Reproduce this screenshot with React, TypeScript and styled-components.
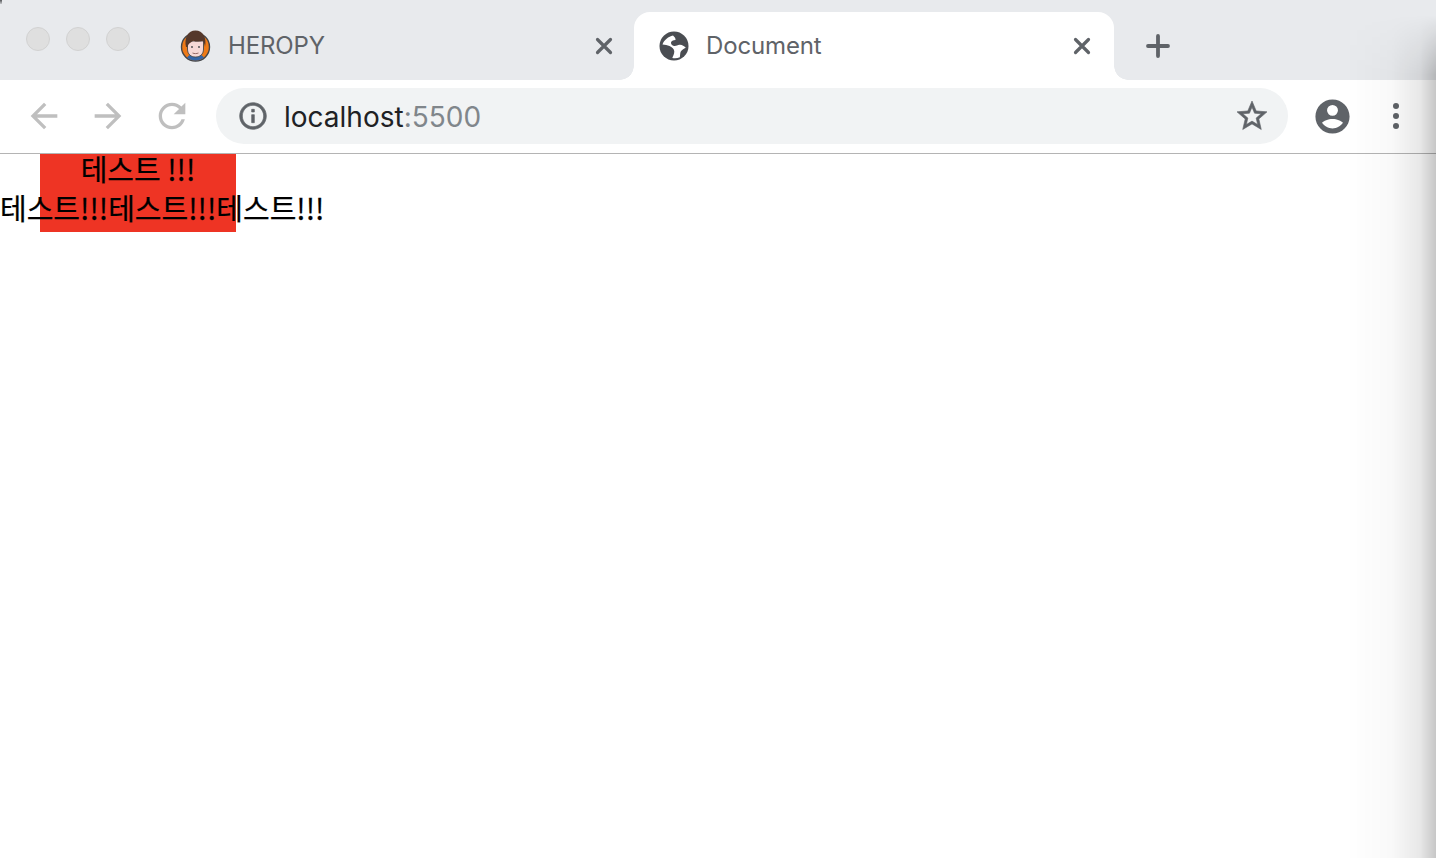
import styled, { createGlobalStyle } from 'styled-components';

const GlobalStyle = createGlobalStyle`
    html, body {
        margin: 0;
        padding: 0;
        height: 100%;
        background: #fff;
        overflow: hidden;
    }
`;

const Icon = ({ d, size, color, weight = 0 }: { d: string; size: number; color: string; weight?: number }) => (
    <svg width={size} height={size} viewBox="0 0 24 24" fill={color} stroke={color} strokeWidth={weight}>
        <path d={d} fillRule="evenodd" />
    </svg>
);

const paths = {
    back: 'M20 11H7.83l5.59-5.59L12 4l-8 8 8 8 1.41-1.41L7.83 13H20v-2z',
    forward: 'M12 4l-1.41 1.41L16.17 11H4v2h12.17l-5.58 5.59L12 20l8-8z',
    reload: 'M17.65 6.35C16.2 4.9 14.21 4 12 4c-4.42 0-7.99 3.58-7.99 8s3.57 8 7.99 8c3.73 0 6.84-2.55 7.73-6h-2.08c-.82 2.33-3.04 4-5.65 4-3.31 0-6-2.69-6-6s2.69-6 6-6c1.66 0 3.14.69 4.22 1.78L13 11h7V4l-2.35 2.35z',
    info: 'M11 7h2v2h-2zm0 4h2v6h-2zm1-9C6.48 2 2 6.48 2 12s4.48 10 10 10 10-4.48 10-10S17.52 2 12 2zm0 18c-4.41 0-8-3.59-8-8s3.59-8 8-8 8 3.59 8 8-3.59 8-8 8z',
    star: 'M22 9.24l-7.19-.62L12 2 9.19 8.63 2 9.24l5.46 4.73L5.82 21 12 17.27 18.18 21l-1.63-7.03L22 9.24zM12 15.4l-3.76 2.27 1-4.28-3.32-2.88 4.38-.38L12 6.1l1.71 4.04 4.38.38-3.32 2.88 1 4.28L12 15.4z',
    account: 'M12 2C6.48 2 2 6.48 2 12s4.48 10 10 10 10-4.48 10-10S17.52 2 12 2zm0 3.2a3.2 3.2 0 1 1 0 6.4 3.2 3.2 0 0 1 0-6.4zM12 13.4c2.6 0 5.2 1 6.1 2.3-1.3 2-3.6 3.3-6.1 3.3s-4.8-1.3-6.1-3.3c.9-1.3 3.5-2.3 6.1-2.3z',
};

const CloseIcon = () => (
    <svg width={28} height={28} viewBox="0 0 28 28" stroke="#5f6368" strokeWidth={3.2} strokeLinecap="round">
        <path d="M7.5 7.5l13 13M20.500 7.500l-13 13" />
    </svg>
);

const PlusIcon = () => (
    <svg width={36} height={36} viewBox="0 0 36 36" stroke="#5f6368" strokeWidth={3.8} strokeLinecap="round">
        <path d="M18 8v20M8 18h20" />
    </svg>
);

const GlobeIcon = () => (
    <svg width={30} height={30} viewBox="0 0 30 30">
        <circle cx={15} cy={15} r={14.500} fill="#4a4d52" />
        <path
            d="M14 4.500C9.500 5.500 5 9 3.500 13.500c2.500.5 5 .5 7 1.500 2.500 1.300 4.800 3 4.800 5.500 0 2.500-1.300 4.500-2 6.500 2.700.5 5.300.3 7.500-.8.500-2 .2-4 1-5.700.9-1.700 2.900-2.800 5-3.800-2-1.700-3.700-3.200-6.300-2.900-2 .2-3.700 1.700-5.500 1.200-1.800-.5-3.300-2-3-3.500.3-1.500 2-2.300 4.500-2.500.3-1.500-.7-3-2.500-4.500z"
            fill="#fff"
        />
    </svg>
);

const AvatarIcon = () => (
    <svg width={31} height={32} viewBox="0 0 31 32">
        <circle cx={15.500} cy={17} r={14} fill="#ef7a17" stroke="#44464a" strokeWidth={1.400} />
        <path d="M7 27.500c2-2.800 5-3.700 8.500-3.700s6.500.9 8.500 3.700c-2.300 1.900-5.200 3-8.500 3s-6.200-1.100-8.500-3z" fill="#3465a8" />
        <path d="M7.500 11h16v8c0 5.500-3.500 8-8 8s-8-2.500-8-8z" fill="#f6d8d6" stroke="#44464a" strokeWidth={0.900} />
        <path d="M6 17C4 8 8 .5 15.500 .5S27 8 25 17c-.3-2.500-1-4.700-2.300-6.200-2.700 1-7 1.200-9.500-.4C11.500 12.500 8 13 7.500 17z" fill="#55382b" />
        <circle cx={12} cy={17} r={0.900} fill="#44464a" />
        <circle cx={19} cy={17} r={0.900} fill="#44464a" />
        <path d="M12.500 23c2 .8 4 .8 6 0" fill="none" stroke="#8c5f5a" strokeWidth={0.900} />
    </svg>
);

const App = () => (
    <Window>
        <GlobalStyle />
        <TabStrip>
            <TrafficLights>
                <Light />
                <Light />
                <Light />
            </TrafficLights>
            <Tab>
                <AvatarIcon />
                <TabTitle>HEROPY</TabTitle>
                <CloseIcon />
            </Tab>
            <Tab $active>
                <GlobeIcon />
                <TabTitle>Document</TabTitle>
                <CloseIcon />
            </Tab>
            <NewTab>
                <PlusIcon />
            </NewTab>
        </TabStrip>
        <Toolbar>
            <NavButton>
                <Icon d={paths.back} size={40} color="#bfbfbf" />
            </NavButton>
            <NavButton>
                <Icon d={paths.forward} size={40} color="#bfbfbf" />
            </NavButton>
            <NavButton>
                <Icon d={paths.reload} size={40} color="#bfbfbf" />
            </NavButton>
            <Omnibox>
                <Icon d={paths.info} size={32} color="#5f6368" weight={0.5} />
                <Url>
                    localhost<UrlPort>:5500</UrlPort>
                </Url>
                <Icon d={paths.star} size={36} color="#5f6368" weight={0.4} />
            </Omnibox>
            <NavButton>
                <Icon d={paths.account} size={41} color="#5f6368" />
            </NavButton>
            <MenuButton>
                <MenuDot />
                <MenuDot />
                <MenuDot />
            </MenuButton>
        </Toolbar>
        <Page>
            <RedBlock />
            <PageText>
                <CenteredLine>테스트 !!!</CenteredLine>
                <PlainLine>테스트!!!테스트!!!테스트!!!</PlainLine>
            </PageText>
        </Page>
        <EdgeShadow />
    </Window>
);

interface TabProps {
    $active?: boolean;
}

const Window = styled.div`
    position: relative;
    width: 1436px;
    height: 858px;
    overflow: hidden;
    background: #fff;
    font-family: Inter, 'Liberation Sans', sans-serif;

    &::before {
        content: '';
        position: absolute;
        top: 0;
        left: 0;
        width: 2px;
        height: 4px;
        background: linear-gradient(to bottom, #55575a, #c8cacd);
    }
`;

const TabStrip = styled.div`
    display: flex;
    align-items: flex-end;
    height: 80px;
    background: #e8eaed;
`;

const TrafficLights = styled.div`
    display: flex;
    align-self: flex-start;
    gap: 16px;
    padding: 27px 0 0 26px;
    width: 132px;
    box-sizing: border-box;
`;

const Light = styled.div`
    width: 24px;
    height: 24px;
    box-sizing: border-box;
    border-radius: 50%;
    background: #dfdfdf;
    border: 1px solid #d2d2d2;
`;

// active tab flares out into the toolbar at its two bottom corners
const Tab = styled.div<TabProps>`
    position: relative;
    display: flex;
    align-items: center;
    width: ${(props) => (props.$active ? '480px' : '502px')};
    height: 68px;
    box-sizing: border-box;
    padding: ${(props) => (props.$active ? '0 18px 0 25px' : '0 16px 0 48px')};
    border-radius: 16px 16px 0 0;
    background: ${(props) => (props.$active ? '#fff' : 'transparent')};

    ${(props) =>
        props.$active &&
        `
        &::before,
        &::after {
            content: '';
            position: absolute;
            bottom: 0;
            width: 14px;
            height: 14px;
        }

        &::before {
            left: -14px;
            background: radial-gradient(circle at 0 0, #e8eaed 13.5px, #fff 14px);
        }

        &::after {
            right: -14px;
            background: radial-gradient(circle at 100% 0, #e8eaed 13.5px, #fff 14px);
        }
    `}
`;

const TabTitle = styled.div`
    flex: 1;
    margin-left: 17px;
    padding-bottom: 2px;
    font-size: 24px;
    letter-spacing: -0.15px;
    color: #5f6368;
`;

const NewTab = styled.div`
    display: flex;
    align-items: center;
    height: 68px;
    padding-left: 26px;
`;

const Toolbar = styled.div`
    display: flex;
    align-items: center;
    height: 74px;
    padding: 0 0 1px 12px;
    box-sizing: border-box;
    background: #fff;
    border-bottom: 1px solid #b4b4b4;
`;

const NavButton = styled.div`
    display: flex;
    align-items: center;
    justify-content: center;
    width: 64px;
    height: 56px;
`;

const Omnibox = styled.div`
    display: flex;
    align-items: center;
    width: 1072px;
    height: 56px;
    margin: 0 12px;
    padding: 0 18px 0 21px;
    box-sizing: border-box;
    border-radius: 28px;
    background: #f1f3f4;
`;

const Url = styled.div`
    flex: 1;
    margin-left: 15px;
    padding-top: 1px;
    font-size: 28px;
    color: #202124;
`;

const UrlPort = styled.span`
    color: #80868b;
`;

const MenuButton = styled.div`
    display: flex;
    flex-direction: column;
    align-items: center;
    gap: 4px;
    width: 64px;
`;

const MenuDot = styled.div`
    width: 6px;
    height: 6px;
    border-radius: 50%;
    background: #5f6368;
`;

const Page = styled.div`
    display: grid;
    font-family: 'Noto Sans CJK KR', 'Liberation Sans', sans-serif;
    font-size: 29px;
    line-height: 39px;
    color: #000;
    -webkit-text-stroke: 0.25px #000;

    & > * {
        grid-area: 1 / 1;
    }
`;

const RedBlock = styled.div`
    width: 196px;
    height: 78px;
    margin-left: 40px;
    background: #ee3424;
`;

const PageText = styled.div`
    margin-top: -5px;
`;

const CenteredLine = styled.div`
    width: 196px;
    margin-left: 40px;
    text-align: center;
`;

const PlainLine = styled.div`
    white-space: nowrap;
`;

const EdgeShadow = styled.div`
    position: absolute;
    top: 0;
    right: 0;
    bottom: 0;
    width: 90px;
    pointer-events: none;
    background: linear-gradient(
        to right,
        rgba(0, 0, 0, 0),
        rgba(0, 0, 0, 0.025) 50%,
        rgba(0, 0, 0, 0.09) 82%,
        rgba(0, 0, 0, 0.22)
    );
    mask-image: linear-gradient(to bottom, transparent 15px, black 75px);
`;

export default App;
